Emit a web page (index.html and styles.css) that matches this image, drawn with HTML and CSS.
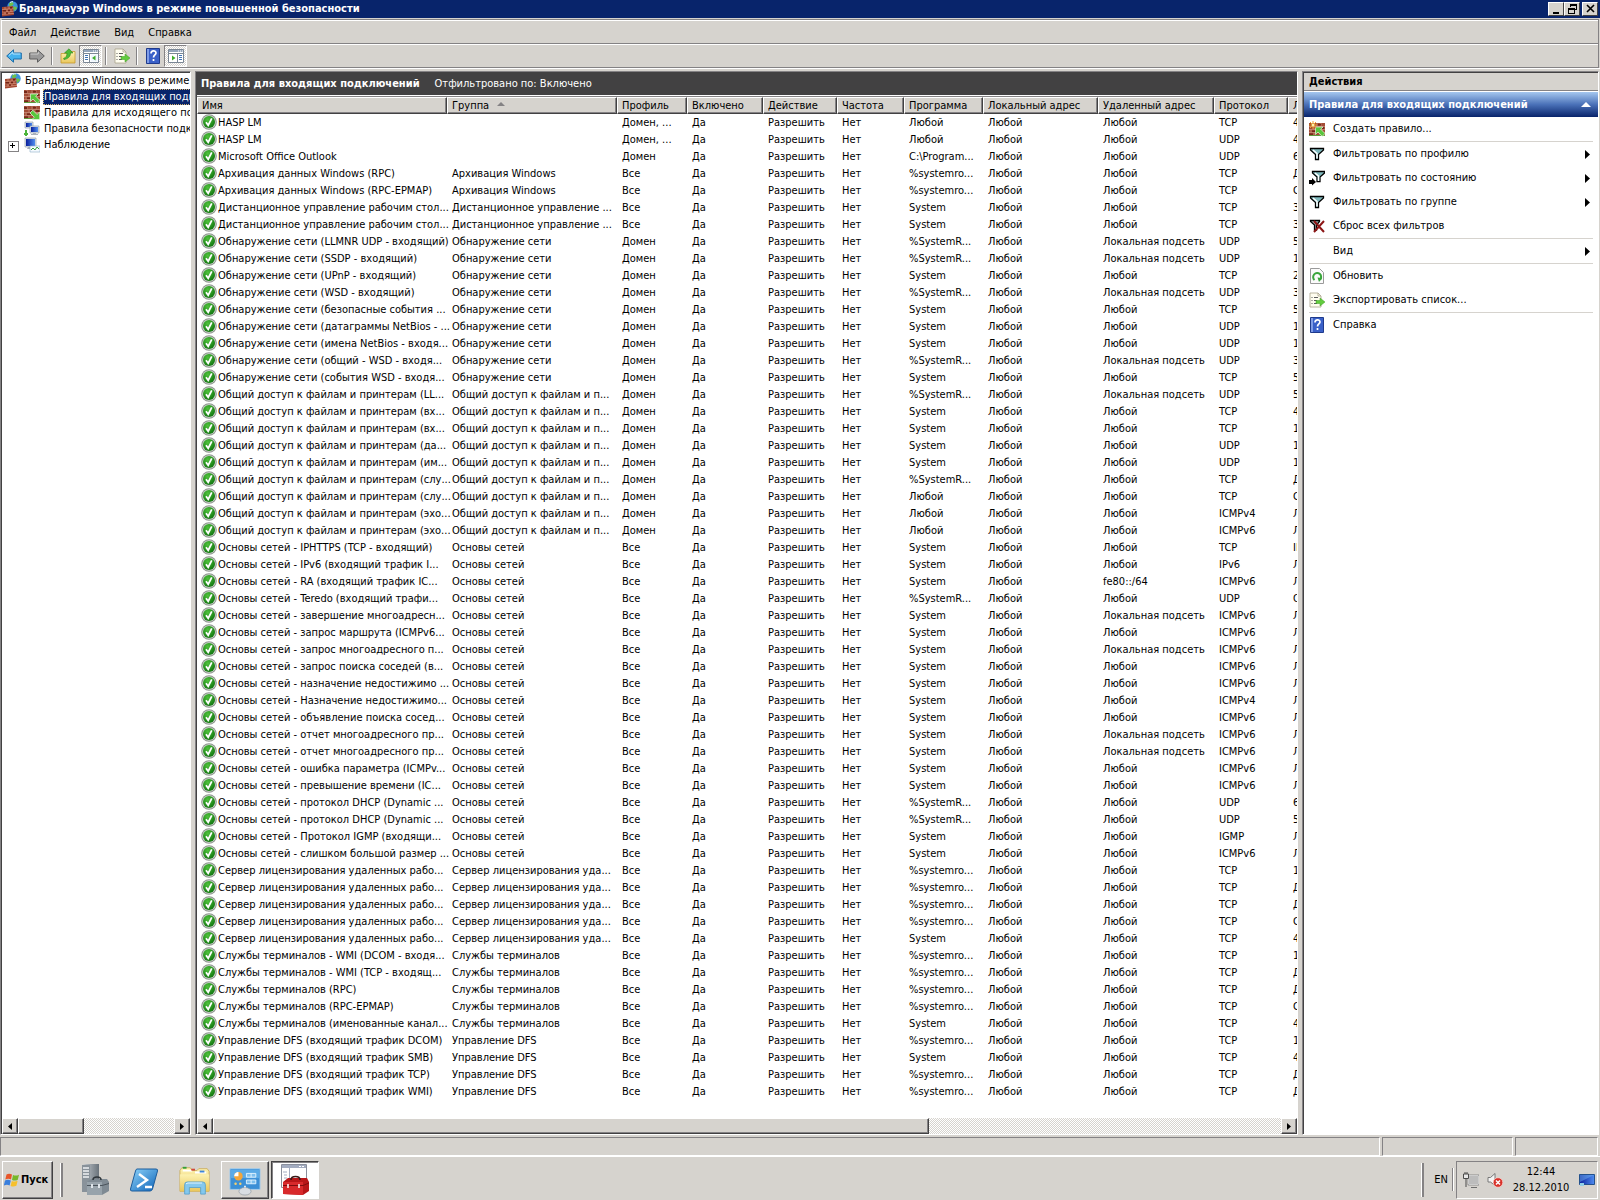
FILE: index.html
```html
<!DOCTYPE html>
<html lang="ru">
<head>
  <meta charset="UTF-8">
  <meta name="viewport" content="width=device-width, initial-scale=1.0">
  <title>Брандмауэр Windows в режиме повышенной безопасности</title>
  <link rel="stylesheet" href="styles.css">
</head>
<body>
  <!-- icons -->
  <svg class="sprite" aria-hidden="true">
    <defs>
      <linearGradient id="gBlue" x1="0" y1="0" x2="1" y2="1"><stop offset="0" stop-color="#8fd4fa"/><stop offset="1" stop-color="#0b62b8"/></linearGradient>
      <linearGradient id="gFolder" x1="0" y1="0" x2="0" y2="1"><stop offset="0" stop-color="#fdf3b4"/><stop offset="1" stop-color="#eac75c"/></linearGradient>
      <linearGradient id="gScreen" x1="0" y1="0" x2="1" y2="0"><stop offset="0" stop-color="#0a1f9c"/><stop offset="1" stop-color="#4f8df0"/></linearGradient>
      <linearGradient id="gSteel" x1="0" y1="0" x2="1" y2="0"><stop offset="0" stop-color="#c9ced3"/><stop offset="1" stop-color="#6a737b"/></linearGradient>
      <radialGradient id="gGreen" cx="0.4" cy="0.3" r="0.8"><stop offset="0" stop-color="#4fc23c"/><stop offset="1" stop-color="#0b6e0b"/></radialGradient>
    </defs>

    <symbol id="i-ok" viewBox="0 0 16 16">
      <circle cx="8" cy="8" r="7.800" fill="#8d958d"/>
      <circle cx="8" cy="8" r="6.800" fill="#cfd6cf"/>
      <circle cx="8" cy="8" r="6" fill="url(#gGreen)"/>
      <path d="M5 8.2l2.2 3L10.8 4.4" fill="none" stroke="#fff" stroke-width="1.8"/>
    </symbol>

    <symbol id="i-bricks" viewBox="0 0 16 13">
      <path d="M0 0h16v13H0z" fill="#a34c36"/>
      <path d="M0 3.500h16M0 6.500h16M0 9.500h16M3 0v3.500M8 0v3.500M12 0v3.500M5 3.500v3M10 3.500v3M2 6.500v3M8 6.500v3M13 6.500v3M5 9.500V13M11 9.500V13" stroke="#d0a08c" stroke-width=".6"/>
      <path d="M0 1h3v2H0zM6 4h3v2H6zM3 7.500h4v1.500H3zM12 4h3v2h-3zM9 1h3v1.500H9zM0 10.500h4V12H0z" fill="#74291a"/>
      <path d="M0 12.500h16" stroke="#5f9a3c"/>
    </symbol>

    <symbol id="i-firewall" viewBox="0 0 16 16">
      <circle cx="10.500" cy="5.500" r="5.200" fill="#3c92dc"/>
      <path d="M7 2.500c2-2 4-1.500 4.500 0S9 5 7.500 6zM11 6c2-1 4 0 4 1.500L12 10z" fill="#6cc04a"/>
      <path d="M8 1.500q1.500-1 3-.8" stroke="#dff1ff" fill="none"/>
      <path d="M0 6l11-1 1 9-12 1.500z" fill="#a3452f"/>
      <path d="M0 8.500l11.500-.8M0 11l11.500-.7M0 13.300l12-.9M3 6v2.500M7 5.600v2.500M5 8.300v2.500M9 8v2.500M3 11v2.300M7 10.700V13" stroke="#dba28c" stroke-width=".6"/>
      <path d="M1 9h3v1.500H1zM6 8.700h2v1.500H6zM4 11.500h2v1.300H4zM8 6h2v1.500H8z" fill="#6e2416"/>
    </symbol>

    <symbol id="i-inbound" viewBox="0 0 16 14">
      <use href="#i-bricks" width="16" height="13"/>
      <path d="M6.500 4h7.500l-2.300 2.200 4.300 4.300-2.800 2.800-4.300-4.300-2.400 2.500z" fill="#58c63c" stroke="#e6f8df" stroke-width=".7"/>
    </symbol>

    <symbol id="i-outbound" viewBox="0 0 16 14">
      <use href="#i-bricks" width="16" height="13"/>
      <path d="M15.500 13.500H8l2.300-2.200L6 7l2.800-2.800 4.300 4.300 2.400-2.500z" fill="#58c63c" stroke="#e6f8df" stroke-width=".7"/>
    </symbol>

    <symbol id="i-new" viewBox="0 0 16 16">
      <svg y="2" width="16" height="14"><use href="#i-inbound" width="16" height="14"/></svg>
      <path d="M4 0v8M0 4h8M1 1l6 6M7 1L1 7" stroke="#f5a42c" stroke-width="1"/>
      <circle cx="4" cy="4" r="1.500" fill="#fff2a8"/>
    </symbol>

    <symbol id="i-conn" viewBox="0 0 16 16">
      <path d="M1 1h8v6H1z" fill="#dfe5ee" stroke="#8a93a0" stroke-width=".6"/>
      <path d="M2 2h6v4H2z" fill="url(#gScreen)"/>
      <path d="M6 5h9v7H6z" fill="#dfe5ee" stroke="#8a93a0" stroke-width=".6"/>
      <path d="M7 6h7v5H7z" fill="url(#gScreen)"/>
      <path d="M9 12h3v1h2v1H7v-1h2z" fill="#a9b0ba"/>
      <path d="M0 13h4M2 9v6" stroke="#4bb43a" stroke-width="2"/>
    </symbol>

    <symbol id="i-monitor" viewBox="0 0 16 16">
      <path d="M1 1h11v9H1z" fill="#dfe5ee" stroke="#8a93a0" stroke-width=".6"/>
      <path d="M2 2h9v7H2z" fill="url(#gScreen)"/>
      <path d="M4 10h5l1 2H3z" fill="#a9b0ba"/>
      <path d="M6 9h10v6H6z" fill="#f5faff" stroke="#8fb0c8" stroke-width=".6"/>
      <path d="M7 13l2-2 2 2 2-3 2 2" fill="none" stroke="#37a33a" stroke-width="1"/>
    </symbol>

    <symbol id="i-back" viewBox="0 0 16 14">
      <path d="M.7 7L7.500.8V4h7.800v6H7.500v3.200z" fill="#45b2ee" stroke="#1d6ca8"/>
      <path d="M3 6.500L6.800 3v2h7.500" fill="none" stroke="#b8e6ff"/>
    </symbol>
    <symbol id="i-forward" viewBox="0 0 16 14">
      <path d="M15.300 7L8.500.8V4H.7v6h7.800v3.200z" fill="#9a9a9a" stroke="#5e5e5e"/>
      <path d="M1.500 5h7.700V3" fill="none" stroke="#cfcfcf"/>
    </symbol>
    <symbol id="i-up" viewBox="0 0 16 16">
      <path d="M1 5.500h6l1-2h7V15H1z" fill="url(#gFolder)" stroke="#c79a2e" stroke-width=".8"/>
      <path d="M3.500 10.500C6 9.500 7 8 7 5H4.500L9 .8 13 5h-2.500c0 4-3 6-6.500 6.500z" fill="#4dbb36" stroke="#2b8a1c" stroke-width=".6"/>
    </symbol>
    <symbol id="i-tree" viewBox="0 0 16 14">
      <path d="M.5.5h15v13H.5z" fill="#fff" stroke="#7b8795"/>
      <path d="M1 1h14v2H1z" fill="#93a5bb"/><path d="M10 2h1M12 2h1M14 2h1" stroke="#fff"/>
      <path d="M1 4.500h14M6.500 5v8" stroke="#7b8795"/>
      <path d="M2 6.500h3M2 8.500h3M2 10.500h3" stroke="#3f74b5"/>
      <path d="M8 5.500h6.500v7H8z" fill="#eff6ff"/><path d="M12.500 6.500v5L9 9z" fill="#3fae2d"/>
    </symbol>
    <symbol id="i-pane" viewBox="0 0 16 14">
      <path d="M.5.5h15v13H.5z" fill="#fff" stroke="#7b8795"/>
      <path d="M1 1h14v2H1z" fill="#93a5bb"/><path d="M10 2h1M12 2h1M14 2h1" stroke="#fff"/>
      <path d="M1 4.500h14M9.500 5v8" stroke="#7b8795"/>
      <path d="M11 6.500h3M11 8.500h3M11 10.500h3" stroke="#3f74b5"/>
      <path d="M4 6.500v5L7.500 9z" fill="#3fae2d"/>
    </symbol>
    <symbol id="i-export" viewBox="0 0 16 16">
      <path d="M1 1h8l3 3v11H1z" fill="#fffdf0" stroke="#a8a28c" stroke-width=".8"/>
      <path d="M9 1v3h3" fill="none" stroke="#a8a28c" stroke-width=".8"/>
      <path d="M2.500 5.500h1M2.500 8.500h1M2.500 11.500h1M5 5.500h4M5 8.500h3M5 11.500h3" stroke="#5b5b5b"/>
      <path d="M7 8.500h4V6l5 4-5 4v-2.500H7z" fill="#63cc3f" stroke="#3d9e22" stroke-width=".5"/>
    </symbol>
    <symbol id="i-help" viewBox="0 0 14 16">
      <path d="M.5.5h13v15H.5z" fill="#3a60c8" stroke="#1f3a8c"/>
      <path d="M1 1h2v14H1z" fill="#7f9ce6"/>
      <path d="M5 5.500c0-3.500 5-3.500 5-.5 0 2-2.500 2-2.500 4.500M7.500 11v2" fill="none" stroke="#fff" stroke-width="1.700"/>
    </symbol>
    <symbol id="i-refresh" viewBox="0 0 14 16">
      <path d="M.5.5h9l4 4v11H.5z" fill="#fbfbfb" stroke="#9a9a9a"/>
      <path d="M4.500 12a4 4 0 1 1 5.500-.2" fill="none" stroke="#3aa63c" stroke-width="2"/>
      <path d="M7.500 9.500l4.500.5-3 4z" fill="#3aa63c"/>
    </symbol>
    <symbol id="i-funnel" viewBox="0 0 16 14">
      <path d="M1.500 1.500h13v1.500l-5 4.500v5h-3v-5l-5-4.500z" fill="#7fb9bd" stroke="#000" stroke-width="1.300"/>
      <path d="M4 3l4 3.500v5" fill="none" stroke="#fff" stroke-width="1.500"/>
    </symbol>
    <symbol id="i-funnel-state" viewBox="0 0 16 16">
      <path d="M3.500 1.500h12V3l-4.500 4v4.500h-3V7L3.500 3z" fill="#7fb9bd" stroke="#000" stroke-width="1.300"/>
      <path d="M6 3l3.500 3v5" fill="none" stroke="#fff" stroke-width="1.500"/>
      <path d="M0 10h3V8l4 4-4 3.500V14H0z" fill="#000"/>
    </symbol>
    <symbol id="i-funnel-clear" viewBox="0 0 16 14">
      <path d="M1.500 1.500h9v1l-3 3.500v5h-2V6l-4-3.500z" fill="#9aa" stroke="#000" stroke-width="1.300"/>
      <path d="M5 2l10 11M15 2L5 13" stroke="#8c1515" stroke-width="2"/>
    </symbol>

    <symbol id="i-flag" viewBox="0 0 16 16">
      <path d="M2.500 2.500Q5 1 8 2.500L7 7.500Q4.500 6 1.300 7.500z" fill="#e8562a"/>
      <path d="M9 3q3 1.300 6-.3l-1.200 5q-3 1.600-5.800.2z" fill="#77b82a"/>
      <path d="M1 8.500q3-1.500 5.800 0l-1.200 5Q3 12-.2 13.500z" fill="#3a7fdc"/>
      <path d="M7.800 9q3 1.300 5.800-.2l-1.200 5q-3 1.500-5.800.2z" fill="#f6c02c"/>
    </symbol>
    <symbol id="i-server" viewBox="0 0 32 32">
      <path d="M3 1l4-1h13v26l-6 2H3z" fill="url(#gSteel)"/>
      <path d="M3 1h8v27H3z" fill="#89929a"/>
      <path d="M4 4h6M4 7h6M4 10h6M4 13h6" stroke="#eef1f3" stroke-width="1.500"/>
      <path d="M8 18l4-3h16l2 3v9l-7 4H8z" fill="#7f8a93"/>
      <path d="M8 18h15v13H8z" fill="#98a3ab"/>
      <path d="M8 21.500h15l7-2" stroke="#4b545c" fill="none"/>
      <path d="M14 16q0-3 4-3t4 3" stroke="#30363b" stroke-width="1.500" fill="none"/>
      <path d="M12 20h2v4h-2zM19 20h2v4h-2z" fill="#dfe5ea"/>
    </symbol>
    <symbol id="i-ps" viewBox="0 0 32 32">
      <path d="M8 5h19q2 0 1.500 2l-5 18q-.6 2-2.500 2H3q-2 0-1.500-2l5-18Q7 5 8 5z" fill="url(#gBlue)" stroke="#1d5d9c"/>
      <path d="M10 10l8 6-10 7M16 23h7" fill="none" stroke="#fff" stroke-width="2.400"/>
    </symbol>
    <symbol id="i-explorer" viewBox="0 0 34 32">
      <path d="M3 3h9l2 3h5l2-2h9l2 3v21H1V6z" fill="url(#gFolder)" stroke="#c7a44a" stroke-width=".8"/>
      <path d="M4 6h10M17 8h12" stroke="#fff" stroke-width="2"/>
      <path d="M4 2h4v2H4z" fill="#34a13a"/><path d="M13 4h4v2h-4z" fill="#d14a3a"/><path d="M22 6h5v2h-5z" fill="#3e86d8"/>
      <path d="M1 10h31v18H1z" fill="url(#gFolder)" opacity=".9"/>
      <path d="M6 31V21q0-3 3-3h16q3 0 3 3v10h-5v-7H11v7z" fill="#84c8ee" stroke="#4c9bcb" stroke-width=".8"/>
      <path d="M7.500 20l2-.8h15" stroke="#e7f7ff" fill="none"/>
    </symbol>
    <symbol id="i-control" viewBox="0 0 34 32">
      <path d="M1 4h32v22H1z" fill="#3b8fd6" stroke="#a9cdea"/>
      <path d="M2 5h30v9H2z" fill="#5aaae6"/>
      <circle cx="10" cy="12" r="4.500" fill="#f3a63a"/><path d="M10 12V7.500A4.500 4.500 0 0 0 5.500 12z" fill="#fff"/>
      <path d="M18.500 9h10v4h-10zM18.500 16h10v4h-10z" fill="#7fc0ee" stroke="#e1f3ff"/>
      <path d="M23.500 9v4M23.500 16v4" stroke="#e1f3ff"/>
      <circle cx="7" cy="20" r="1.300" fill="#f8cf6a"/><circle cx="12" cy="20" r="1.300" fill="#f8cf6a"/>
      <ellipse cx="17" cy="28" rx="6.500" ry="4" fill="#d9dde2" stroke="#8f979f" stroke-width=".7"/>
      <path d="M17 24v-2" stroke="#e9edf0" stroke-width="2"/>
    </symbol>
    <symbol id="i-mmc" viewBox="0 0 32 32">
      <path d="M2.500.5h25v23h-25z" fill="#fff" stroke="#8a8f9c"/>
      <path d="M3 1h24v3H3z" fill="#a3acc0"/><path d="M20 2.500h2M23 2.500h2" stroke="#fff"/>
      <path d="M10.500 4v19M4 8h4M5 11h3M5 14h3" stroke="#a3acc0"/>
      <path d="M4 18l5-4h19l2 4v9l-6 4-20-1z" fill="#b81618"/>
      <path d="M4 18h20v13l-20-1z" fill="#d8292b"/>
      <path d="M4 21.500h20l6-2.500" stroke="#7d0d0f" fill="none"/>
      <path d="M12 16q0-3.500 4.500-3.500T21 16" stroke="#3a1a1a" stroke-width="1.600" fill="none"/>
      <path d="M8 20h2v4H8zM19 20h2v4h-2z" fill="#f4c6c6"/>
    </symbol>
    <symbol id="i-network" viewBox="0 0 16 16">
      <path d="M5.500 3.500h10v9h-10z" fill="#bcbcbc" stroke="#fff"/>
      <path d="M5 3h11v10H5z" fill="none" stroke="#6d6d6d" stroke-width=".7"/>
      <path d="M8 15.500h6" stroke="#6d6d6d"/>
      <path d="M.5 2h5v4.500h-5zM2 0v2M4 0v2M3 6.500V15" fill="#e8e8e8" stroke="#4a4a4a"/>
    </symbol>
    <symbol id="i-sound" viewBox="0 0 16 16">
      <path d="M1 5.500h2.500L8 1.500v12L3.500 10H1z" fill="#f4f4f4" stroke="#6d6d6d" stroke-width=".9"/>
      <circle cx="11" cy="10.500" r="4.800" fill="#d8322a" stroke="#fbdcd9" stroke-width=".7"/>
      <path d="M9 8.500l4 4M13 8.500l-4 4" stroke="#fff" stroke-width="1.500"/>
    </symbol>
    <symbol id="i-desktop" viewBox="0 0 16 14">
      <path d="M.5 1.500h15v10H.5z" fill="url(#gScreen)" stroke="#23518c"/>
      <path d="M1 2h14L1 9z" fill="#6fb0f0" opacity=".5"/>
      <path d="M1 10h4v3H1z" fill="#8fd0e8"/>
    </symbol>
    <symbol id="i-left" viewBox="0 0 4 7"><path d="M4 0v7L0 3.500z"/></symbol>
    <symbol id="i-right" viewBox="0 0 4 7"><path d="M0 0v7l4-3.500z"/></symbol>
    <symbol id="i-sub" viewBox="0 0 5 9"><path d="M0 0v9l5-4.500z"/></symbol>
  </svg>

  <header class="titlebar">
    <svg class="icon16"><use href="#i-firewall"/></svg>
    <h1>Брандмауэр Windows в режиме повышенной безопасности</h1>
    <div class="win-buttons">
      <button class="win-btn" aria-label="Свернуть"><svg viewBox="0 0 11 10"><path d="M2 8h6v2H2z"/></svg></button>
      <button class="win-btn" aria-label="Восстановить"><svg viewBox="0 0 11 10"><path d="M3 0h7v6H8V5h1V2H4v1H3z"/><path d="M1 4h7v6H1zM2 6v3h5V6z" fill-rule="evenodd"/></svg></button>
      <button class="win-btn close" aria-label="Закрыть"><svg viewBox="0 0 11 10"><path d="M2 1l7 7M9 1L2 8" stroke="#000" stroke-width="1.600"/></svg></button>
    </div>
  </header>

  <div class="bars">
    <nav class="menubar">
      <button>Файл</button>
      <button>Действие</button>
      <button>Вид</button>
      <button>Справка</button>
    </nav>
    <div class="toolbar">
      <button class="tool" aria-label="Назад"><svg class="icon16"><use href="#i-back"/></svg></button>
      <button class="tool" aria-label="Вперед"><svg class="icon16"><use href="#i-forward"/></svg></button>
      <span class="tool-sep"></span>
      <button class="tool" aria-label="Вверх"><svg class="icon16"><use href="#i-up"/></svg></button>
      <button class="tool pressed" aria-label="Дерево консоли"><svg class="icon16"><use href="#i-tree"/></svg></button>
      <span class="tool-sep"></span>
      <button class="tool" aria-label="Экспорт"><svg class="icon16"><use href="#i-export"/></svg></button>
      <span class="tool-sep"></span>
      <button class="tool" aria-label="Справка"><svg class="icon16"><use href="#i-help"/></svg></button>
      <button class="tool pressed" aria-label="Панель действий"><svg class="icon16"><use href="#i-pane"/></svg></button>
    </div>
  </div>

  <main class="panes">
    <aside class="pane tree-pane">
      <ul class="tree">
        <li><a href="#" class="root"><svg class="icon16"><use href="#i-firewall"/></svg><span>Брандмауэр Windows в режиме повышенной безопасности</span></a></li>
        <li><i class="node"></i><a href="#" class="selected"><svg class="icon16"><use href="#i-inbound"/></svg><span>Правила для входящих подключений</span></a></li>
        <li><i class="node"></i><a href="#"><svg class="icon16"><use href="#i-outbound"/></svg><span>Правила для исходящего подключения</span></a></li>
        <li><i class="node"></i><a href="#"><svg class="icon16"><use href="#i-conn"/></svg><span>Правила безопасности подключения</span></a></li>
        <li><i class="node plus"></i><a href="#"><svg class="icon16"><use href="#i-monitor"/></svg><span>Наблюдение</span></a></li>
      </ul>
      <div class="scrollbar">
        <button class="arrow" aria-label="Влево"><svg><use href="#i-left"/></svg></button>
        <div class="track"><div class="thumb thumb-tree"></div></div>
        <button class="arrow" aria-label="Вправо"><svg><use href="#i-right"/></svg></button>
      </div>
    </aside>

    <section class="pane list-pane">
      <div class="list-title"><h2>Правила для входящих подключений</h2><span>Отфильтровано по: Включено</span></div>
      <div class="list">
        <table class="rules">
          <colgroup>
            <col class="c-name"><col class="c-group"><col class="c-profile"><col class="c-enabled"><col class="c-action"><col class="c-freq">
            <col class="c-program"><col class="c-local"><col class="c-remote"><col class="c-proto"><col class="c-port">
          </colgroup>
          <thead>
            <tr>
              <th>Имя</th><th>Группа <span class="sort"></span></th><th>Профиль</th><th>Включено</th><th>Действие</th><th>Частота</th>
              <th>Программа</th><th>Локальный адрес</th><th>Удаленный адрес</th><th>Протокол</th><th>Локальный порт</th>
            </tr>
          </thead>
          <tbody id="rules"></tbody>
        </table>
      </div>
      <div class="scrollbar">
        <button class="arrow" aria-label="Влево"><svg><use href="#i-left"/></svg></button>
        <div class="track"><div class="thumb thumb-list"></div></div>
        <button class="arrow" aria-label="Вправо"><svg><use href="#i-right"/></svg></button>
      </div>
    </section>

    <aside class="pane actions-pane">
      <h2 class="actions-head">Действия</h2>
      <h3 class="actions-group">Правила для входящих подключений <span class="collapse"></span></h3>
      <ul class="actions">
        <li><button><svg class="icon16"><use href="#i-new"/></svg>Создать правило...</button></li>
        <li class="line"><button><svg class="icon16"><use href="#i-funnel"/></svg>Фильтровать по профилю<svg class="sub"><use href="#i-sub"/></svg></button></li>
        <li><button><svg class="icon16"><use href="#i-funnel-state"/></svg>Фильтровать по состоянию<svg class="sub"><use href="#i-sub"/></svg></button></li>
        <li><button><svg class="icon16"><use href="#i-funnel"/></svg>Фильтровать по группе<svg class="sub"><use href="#i-sub"/></svg></button></li>
        <li><button><svg class="icon16"><use href="#i-funnel-clear"/></svg>Сброс всех фильтров</button></li>
        <li class="line"><button><svg class="icon16"></svg>Вид<svg class="sub"><use href="#i-sub"/></svg></button></li>
        <li class="line"><button><svg class="icon16"><use href="#i-refresh"/></svg>Обновить</button></li>
        <li><button><svg class="icon16"><use href="#i-export"/></svg>Экспортировать список...</button></li>
        <li class="line"><button><svg class="icon16"><use href="#i-help"/></svg>Справка</button></li>
      </ul>
    </aside>
  </main>

  <div class="statusbar"><span class="grow"></span><span class="st-mid"></span><span class="st-end"></span></div>

  <footer class="taskbar">
    <button class="start"><svg class="icon16"><use href="#i-flag"/></svg>Пуск</button>
    <span class="grip"></span>
    <div class="tasks">
      <button class="task" aria-label="Диспетчер сервера"><svg><use href="#i-server"/></svg></button>
      <button class="task" aria-label="PowerShell"><svg><use href="#i-ps"/></svg></button>
      <button class="task" aria-label="Проводник"><svg><use href="#i-explorer"/></svg></button>
      <button class="task open" aria-label="Панель управления"><svg><use href="#i-control"/></svg></button>
      <button class="task active" aria-label="Брандмауэр Windows"><svg><use href="#i-mmc"/></svg></button>
    </div>
    <span class="grip"></span>
    <button class="lang">EN</button>
    <span class="lang-sep"></span>
    <div class="tray">
      <svg class="icon16"><use href="#i-network"/></svg>
      <svg class="icon16"><use href="#i-sound"/></svg>
      <div class="clock"><time>12:44</time><span>28.12.2010</span></div>
      <svg class="icon16"><use href="#i-desktop"/></svg>
    </div>
  </footer>

  <script>
    const net = "Обнаружение сети";
    const share = "Общий доступ к файлам и п...";
    const core = "Основы сетей";
    const lic = "Сервер лицензирования уда...";
    const term = "Службы терминалов";
    const any = "Любой";
    const sub = "Локальная подсеть";
    const sysroot = "%systemro...";
    const sysRoot = "%SystemR...";

    // name, group, profile, program, remote address, protocol, local port
    const rules = [
      ["HASP LM", "", "Домен, ...", any, any, "TCP", "475"],
      ["HASP LM", "", "Домен, ...", any, any, "UDP", "475"],
      ["Microsoft Office Outlook", "", "Домен", "C:\\Program...", any, "UDP", "6004"],
      ["Архивация данных Windows (RPC)", "Архивация Windows", "Все", sysroot, any, "TCP", "Динамические"],
      ["Архивация данных Windows (RPC-EPMAP)", "Архивация Windows", "Все", sysroot, any, "TCP", "Сопоставитель"],
      ["Дистанционное управление рабочим стол...", "Дистанционное управление ...", "Все", "System", any, "TCP", "3389"],
      ["Дистанционное управление рабочим стол...", "Дистанционное управление ...", "Все", "System", any, "TCP", "3389"],
      ["Обнаружение сети (LLMNR UDP - входящий)", net, "Домен", sysRoot, sub, "UDP", "5355"],
      ["Обнаружение сети (SSDP - входящий)", net, "Домен", sysRoot, sub, "UDP", "1900"],
      ["Обнаружение сети (UPnP - входящий)", net, "Домен", "System", any, "TCP", "2869"],
      ["Обнаружение сети (WSD - входящий)", net, "Домен", sysRoot, sub, "UDP", "3702"],
      ["Обнаружение сети (безопасные события ...", net, "Домен", "System", any, "TCP", "5358"],
      ["Обнаружение сети (датаграммы NetBios - ...", net, "Домен", "System", any, "UDP", "138"],
      ["Обнаружение сети (имена NetBios - входя...", net, "Домен", "System", any, "UDP", "137"],
      ["Обнаружение сети (общий - WSD - входя...", net, "Домен", sysRoot, sub, "UDP", "3702"],
      ["Обнаружение сети (события WSD - входя...", net, "Домен", "System", any, "TCP", "5357"],
      ["Общий доступ к файлам и принтерам (LL...", share, "Домен", sysRoot, sub, "UDP", "5355"],
      ["Общий доступ к файлам и принтерам (вх...", share, "Домен", "System", any, "TCP", "445"],
      ["Общий доступ к файлам и принтерам (вх...", share, "Домен", "System", any, "TCP", "139"],
      ["Общий доступ к файлам и принтерам (да...", share, "Домен", "System", any, "UDP", "138"],
      ["Общий доступ к файлам и принтерам (им...", share, "Домен", "System", any, "UDP", "137"],
      ["Общий доступ к файлам и принтерам (слу...", share, "Домен", sysRoot, any, "TCP", "Динамические"],
      ["Общий доступ к файлам и принтерам (слу...", share, "Домен", any, any, "TCP", "Сопоставитель"],
      ["Общий доступ к файлам и принтерам (эхо...", share, "Домен", any, any, "ICMPv4", any],
      ["Общий доступ к файлам и принтерам (эхо...", share, "Домен", any, any, "ICMPv6", any],
      ["Основы сетей - IPHTTPS (TCP - входящий)", core, "Все", "System", any, "TCP", "IPHTTPS"],
      ["Основы сетей - IPv6 (входящий трафик I...", core, "Все", "System", any, "IPv6", any],
      ["Основы сетей - RA (входящий трафик IC...", core, "Все", "System", "fe80::/64", "ICMPv6", any],
      ["Основы сетей - Teredo (входящий трафи...", core, "Все", sysRoot, any, "UDP", "Обход узлов"],
      ["Основы сетей - завершение многоадресн...", core, "Все", "System", sub, "ICMPv6", any],
      ["Основы сетей - запрос маршрута (ICMPv6...", core, "Все", "System", any, "ICMPv6", any],
      ["Основы сетей - запрос многоадресного п...", core, "Все", "System", sub, "ICMPv6", any],
      ["Основы сетей - запрос поиска соседей (в...", core, "Все", "System", any, "ICMPv6", any],
      ["Основы сетей - назначение недостижимо ...", core, "Все", "System", any, "ICMPv6", any],
      ["Основы сетей - Назначение недостижимо...", core, "Все", "System", any, "ICMPv4", any],
      ["Основы сетей - объявление поиска сосед...", core, "Все", "System", any, "ICMPv6", any],
      ["Основы сетей - отчет многоадресного пр...", core, "Все", "System", sub, "ICMPv6", any],
      ["Основы сетей - отчет многоадресного пр...", core, "Все", "System", sub, "ICMPv6", any],
      ["Основы сетей - ошибка параметра (ICMPv...", core, "Все", "System", any, "ICMPv6", any],
      ["Основы сетей - превышение времени (IC...", core, "Все", "System", any, "ICMPv6", any],
      ["Основы сетей - протокол DHCP (Dynamic ...", core, "Все", sysRoot, any, "UDP", "68"],
      ["Основы сетей - протокол DHCP (Dynamic ...", core, "Все", sysRoot, any, "UDP", "546"],
      ["Основы сетей - Протокол IGMP (входящи...", core, "Все", "System", any, "IGMP", any],
      ["Основы сетей - слишком большой размер ...", core, "Все", "System", any, "ICMPv6", any],
      ["Сервер лицензирования удаленных рабо...", lic, "Все", sysroot, any, "TCP", "135"],
      ["Сервер лицензирования удаленных рабо...", lic, "Все", sysroot, any, "TCP", "Динамические"],
      ["Сервер лицензирования удаленных рабо...", lic, "Все", sysroot, any, "TCP", "Динамические"],
      ["Сервер лицензирования удаленных рабо...", lic, "Все", sysroot, any, "TCP", "Сопоставитель"],
      ["Сервер лицензирования удаленных рабо...", lic, "Все", "System", any, "TCP", "445"],
      ["Службы терминалов - WMI (DCOM - входя...", term, "Все", sysroot, any, "TCP", "135"],
      ["Службы терминалов - WMI (TCP - входящ...", term, "Все", sysroot, any, "TCP", "Динамические"],
      ["Службы терминалов (RPC)", term, "Все", sysroot, any, "TCP", "Динамические"],
      ["Службы терминалов (RPC-EPMAP)", term, "Все", sysroot, any, "TCP", "Сопоставитель"],
      ["Службы терминалов (именованные канал...", term, "Все", "System", any, "TCP", "445"],
      ["Управление DFS (входящий трафик DCOM)", "Управление DFS", "Все", sysroot, any, "TCP", "135"],
      ["Управление DFS (входящий трафик SMB)", "Управление DFS", "Все", "System", any, "TCP", "445"],
      ["Управление DFS (входящий трафик TCP)", "Управление DFS", "Все", sysroot, any, "TCP", "Динамические"],
      ["Управление DFS (входящий трафик WMI)", "Управление DFS", "Все", sysroot, any, "TCP", "Динамические"],
    ];

    document.getElementById("rules").innerHTML = rules.map(([name, group, profile, program, remote, proto, port]) => {
      const cells = [group, profile, "Да", "Разрешить", "Нет", program, any, remote, proto, port];
      return `<tr><td class="name"><svg class="icon16"><use href="#i-ok"/></svg>${name}</td>${cells.map(c => `<td>${c}</td>`).join("")}</tr>`;
    }).join("");
  </script>
</body>
</html>
```

FILE: styles.css
```css
* { box-sizing: border-box; margin: 0; padding: 0; }

body {
  height: 100vh;
  display: flex;
  flex-direction: column;
  overflow: hidden;
  background: #d6d3ce;
  color: #000;
  font: 11px/16px Tahoma, "DejaVu Sans Condensed", "DejaVu Sans", sans-serif;
}

button { font: inherit; color: inherit; background: none; border: none; }
ul { list-style: none; }
a { color: inherit; text-decoration: none; }
h1, h2, h3 { font-size: 11px; font-weight: bold; }
.sprite { position: absolute; width: 0; height: 0; }
.icon16 { width: 16px; height: 16px; flex: none; display: block; }

/* title */
.titlebar { display: flex; align-items: center; height: 18px; padding: 0 2px; gap: 1px; background: #08246b; color: #fff; flex: none; }
.titlebar h1 { flex: 1; white-space: nowrap; }
.win-buttons { display: flex; }
.win-btn { width: 16px; height: 14px; background: #d6d3ce; border: 1px solid; border-color: #fff #424142 #424142 #fff; display: flex; align-items: center; justify-content: center; }
.win-btn svg { width: 11px; height: 10px; }
.win-btn.close { margin-left: 2px; }

/* menu and toolbar */
.bars { flex: none; margin: 1px 1px 0; border: 1px solid #848284; border-left-color: #fff; }
.menubar, .toolbar { display: flex; align-items: center; height: 24px; border-top: 1px solid #fff; }
.menubar { padding: 2px 0 0; border-bottom: 1px solid #848284; }
.menubar button { padding: 0 7px; height: 20px; }
.toolbar { height: 23px; }
.tool { height: 22px; width: 23px; display: flex; align-items: center; justify-content: center; }
.tool.pressed { border: 1px solid; border-color: #848284 #fff #fff #848284; background: repeating-conic-gradient(#fff 0 25%, #d6d3ce 0 50%) 0 0 / 2px 2px; }
.tool-sep { width: 2px; height: 18px; margin: 0 3px; border-left: 1px solid #848284; border-right: 1px solid #fff; }

/* panes */
.panes { flex: 1; min-height: 0; display: flex; gap: 4px; padding: 2px 1px 2px 0; border-top: 1px solid #fff; }
.pane { background: #fff; border: 1px solid; border-color: #848284 #fff #fff #848284; box-shadow: inset 1px 1px #424142; padding: 1px 0 0 1px; display: flex; flex-direction: column; overflow: hidden; }
.tree-pane { width: 191px; flex: none; }
.list-pane { flex: 1; min-width: 0; }
.actions-pane { width: 297px; flex: none; }

.tree { flex: 1; }
.tree li { display: flex; height: 16px; }
.tree a { display: flex; gap: 3px; white-space: nowrap; }
.tree a.root { padding-left: 3px; }
.tree a span { padding: 0 1px; }
.tree .selected span { background: #08246b; color: #fff; outline: 1px dotted #d6b36b; outline-offset: -1px; }
.node { width: 22px; flex: none; }
.node.plus { background:
  linear-gradient(#000, #000) 8px 8px / 5px 1px no-repeat,
  linear-gradient(#000, #000) 10px 6px / 1px 5px no-repeat; position: relative; }
.node.plus::after { content: ""; position: absolute; left: 6px; top: 4px; width: 9px; height: 9px; border: 1px solid #848284; }

.list-title { flex: none; display: flex; align-items: center; gap: 15px; height: 22px; padding: 0 4px; background: #424142; color: #fff; white-space: nowrap; }
.list { flex: 1; min-height: 0; overflow: hidden; margin-top: 1px; border-top: 1px solid #848284; }
.rules { table-layout: fixed; width: 1182px; border-collapse: separate; border-spacing: 0; }
.rules th { height: 17px; padding: 0 4px; text-align: left; font-weight: normal; white-space: nowrap; overflow: hidden; line-height: 15px; background: #d6d3ce; border: 1px solid; border-color: #fff #424142 #424142 #fff; box-shadow: inset -1px -1px #848284; }
.rules td { height: 17px; padding: 0 0 0 5px; line-height: 17px; white-space: nowrap; }
.rules td.name { padding-left: 4px; }
.rules .icon16 { float: left; margin-right: 1px; }
.c-name { width: 250px; }
.c-group { width: 170px; }
.c-profile { width: 70px; }
.c-enabled { width: 76px; }
.c-action { width: 74px; }
.c-freq { width: 67px; }
.c-program { width: 79px; }
.c-local { width: 115px; }
.c-remote { width: 116px; }
.c-proto { width: 74px; }
.c-port { width: 91px; }
.sort { display: inline-block; margin: 0 0 3px 5px; border: 4px solid transparent; border-top: none; border-bottom: 4px solid #848284; }

/* scrollbars */
.scrollbar { display: flex; height: 16px; flex: none; }
.arrow, .thumb { background: #d6d3ce; border: 1px solid; border-color: #fff #424142 #424142 #fff; box-shadow: inset -1px -1px #848284; }
.arrow { width: 16px; display: flex; align-items: center; justify-content: center; }
.arrow svg { width: 4px; height: 7px; }
.track { flex: 1; background: repeating-conic-gradient(#fff 0 25%, #d6d3ce 0 50%) 0 0 / 2px 2px; }
.thumb { height: 16px; }
.thumb-tree { width: 42%; }
.thumb-list { width: 67%; }

/* actions */
.actions-head { height: 18px; line-height: 18px; padding-left: 5px; background: #d6d3ce; border-bottom: 1px solid #848284; flex: none; }
.actions-group { display: flex; align-items: center; justify-content: space-between; height: 25px; margin-top: 1px; padding: 0 7px 0 5px; color: #fff; background: linear-gradient(#a5c7ef, #4a71b8 50%, #08246b); flex: none; }
.collapse { border: 5px solid transparent; border-top: none; border-bottom-color: #fff; }
.actions { padding: 0 5px; }
.actions li.line { border-top: 1px solid #d6d3ce; }
.actions button { display: flex; align-items: center; gap: 8px; width: 100%; height: 24px; text-align: left; }
.actions .sub { width: 5px; height: 9px; margin: 0 3px 0 auto; }

/* status bar */
.statusbar { display: flex; gap: 2px; height: 19px; padding-right: 2px; flex: none; }
.statusbar span { border: 1px solid; border-color: #848284 #fff #fff #848284; }
.grow { flex: 1; }
.st-mid { width: 131px; }
.st-end { width: 83px; }

/* taskbar */
.taskbar { display: flex; align-items: center; height: 44px; padding: 3px 2px 1px; border-top: 1px solid #fff; flex: none; }
.start { display: flex; align-items: center; gap: 1px; width: 51px; height: 38px; padding: 0 1px; font-weight: bold; border: 1px solid; border-color: #fff #424142 #424142 #fff; box-shadow: inset -1px -1px #848284; }
.grip { width: 3px; height: 34px; margin: 0 8px 0 7px; border-left: 1px solid #fff; border-right: 2px solid #848284; }
.tasks { display: flex; gap: 2px; flex: 1; }
.task { width: 48px; height: 38px; display: flex; align-items: center; justify-content: center; border: 1px solid transparent; }
.task svg { width: 32px; height: 32px; }
.task.open { border-color: #fff #424142 #424142 #fff; box-shadow: inset -1px -1px #848284; }
.task.active { background: #fff; border-color: #424142 #fff #fff #424142; box-shadow: inset 1px 1px #848284; }
.lang { width: 18px; }
.lang-sep { width: 2px; height: 23px; margin: 0 2px; border-left: 1px solid #848284; border-right: 1px solid #fff; }
.tray { display: flex; align-items: center; gap: 8px; height: 38px; padding: 0 2px 0 6px; border: 1px solid; border-color: #848284 #fff #fff #848284; }
.clock { width: 60px; display: flex; flex-direction: column; align-items: center; }
```
